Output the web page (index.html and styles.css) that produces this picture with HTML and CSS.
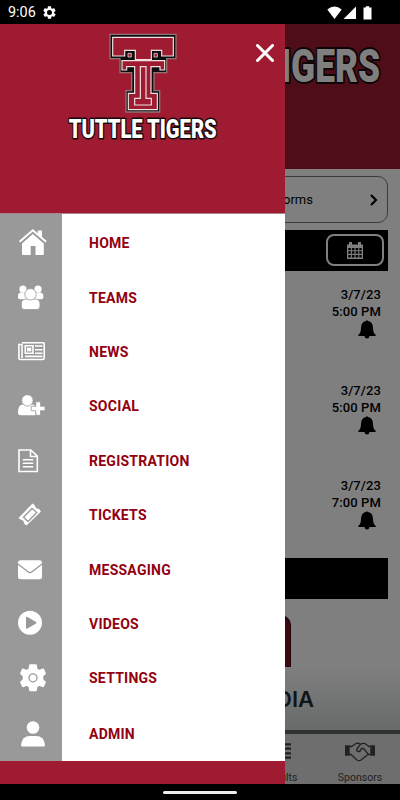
FILE: index.html
```
<!DOCTYPE html>
<html lang="en">
<head>
    <meta charset="UTF-8">
    <meta name="viewport" content="width=device-width, initial-scale=1.0">
    <title>Tuttle Tigers</title>
    <link rel="stylesheet" href="styles.css">
</head>
<body>
    <div class="status-bar">
        <span class="time">9:06</span>
        <svg class="status-gear" viewBox="0 0 24 24"><path fill-rule="evenodd" d="M19.4 13c.1-.6.1-1.400 0-2l2.100-1.600c.2-.2.2-.5.100-.7l-2-3.400c-.1-.2-.4-.3-.6-.2l-2.500 1c-.5-.4-1.100-.7-1.700-1l-.4-2.600c0-.3-.2-.5-.5-.5h-4c-.3 0-.5.200-.5.5l-.4 2.600c-.6.300-1.200.6-1.700 1l-2.500-1c-.2-.1-.5 0-.6.200l-2 3.400c-.1.200-.1.500.1.700L4.500 11c-.1.600-.1 1.400 0 2l-2.100 1.600c-.2.200-.2.500-.1.700l2 3.400c.1.200.4.300.6.200l2.500-1c.5.400 1.100.7 1.700 1l.4 2.600c0 .3.200.5.500.5h4c.3 0 .5-.2.500-.5l.4-2.600c.6-.3 1.200-.6 1.700-1l2.500 1c.2.100.5 0 .6-.2l2-3.400c.1-.2.100-.5-.1-.7zM12 16a4 4 0 1 1 0-8 4 4 0 0 1 0 8z"/></svg>
        <svg class="status-icons" viewBox="0 0 48 14">
            <path d="M.3 3.500Q7.500-2.500 14.700 3.500L7.500 13z"/>
            <path d="M29 .5V13H16.500z"/>
            <path d="M36.500 1.500h2.300V.2h3.400v1.300h2.300V13.500h-8z"/>
        </svg>
    </div>

    <div class="app">
        <main class="page">
            <header class="page-header">
                <svg class="page-wordmark" viewBox="0 0 264 40">
                    <text class="wordmark" x="3" y="35" textLength="259" lengthAdjust="spacingAndGlyphs">TUTTLE TIGERS</text>
                </svg>
            </header>
            <div class="forms-card">
                <span>Forms</span>
                <svg class="chevron" viewBox="0 0 10 12"><path d="M2 1l5 5-5 5"/></svg>
            </div>
            <div class="events-bar">
                <div class="calendar-btn">
                    <svg viewBox="0 0 16 17">
                        <path fill-rule="evenodd" d="M0 2.500h2V0h3v2.500h6V0h3v2.500h2V17H0zM1.300 6v2.200h2.500V6zm3.600 0v2.200h2.600V6zm3.700 0v2.200h2.600V6zm3.700 0v2.200h2.400V6zM1.300 9.300v2.400h2.500V9.300zm3.600 0v2.400h2.600V9.300zm3.700 0v2.400h2.600V9.300zm3.700 0v2.400h2.400V9.300zM1.300 12.900v2.600h2.500v-2.600zm3.600 0v2.600h2.600v-2.600zm3.700 0v2.600h2.600v-2.600zm3.700 0v2.600h2.400v-2.600z"/>
                    </svg>
                </div>
            </div>
            <div class="events">
                <div class="event">
                    <span>3/7/23</span>
                    <span>5:00 PM</span>
                    <svg class="bell" viewBox="0 0 18 19"><use href="#bell"/></svg>
                </div>
                <div class="event">
                    <span>3/7/23</span>
                    <span>5:00 PM</span>
                    <svg class="bell" viewBox="0 0 18 19"><use href="#bell"/></svg>
                </div>
                <div class="event">
                    <span>3/7/23</span>
                    <span>7:00 PM</span>
                    <svg class="bell" viewBox="0 0 18 19"><use href="#bell"/></svg>
                </div>
            </div>
            <div class="section-bar"></div>
            <div class="media">
                <div class="media-logo"></div>
                <div class="media-name">MEDIA</div>
            </div>
            <nav class="tabs">
                <div class="tab">
                    <svg class="list-icon" viewBox="0 0 22 16"><path d="M0 1.300h22M0 5.700h22M0 10.300h22M0 14.700h22"/></svg>
                    <span>Results</span>
                </div>
                <div class="tab">
                    <svg class="shake-icon" viewBox="0 0 30 20">
                        <path class="cuff" d="M.5 4H4v9H.5zM26 4h3.500v9H26z"/>
                        <path d="M4 4.500h2.500L11 1.500q2-.8 4.500.8 2-1.300 4.500-.8l4 3h2M4 12.500h2l6 5.500q2 1.400 4 0l7-5.500h3M15.500 2.300l-3.700 4.700q-.3 2.700 2 2.500 2-.2 2.700-3h2l5 6"/>
                    </svg>
                    <span>Sponsors</span>
                </div>
            </nav>
        </main>
        <div class="scrim"></div>

        <aside class="drawer">
            <div class="drawer-header">
                <svg class="logo" viewBox="0 0 510 375">
                    <path class="edge" d="M150 28H348V101H320V143H282V197H299V261H198V197H215V143H180V101H150Z"/>
                    <path class="inlay" d="M158 37H340V93H305V76H274V104H226V76H194V93H158Z"/>
                    <path class="inlay" d="M186 107H314V135H300V125H273V205H292V254H205V205H224V125H200V135H186Z"/>
                    <path class="inlay" d="M241 125H258V220H274V240H224V220H241Z"/>
                    <path class="eye" d="M204 85h10v11h-10zM282 85h10v11h-10z"/>
                    <text class="wordmark" x="26" y="339" textLength="444" lengthAdjust="spacingAndGlyphs">TUTTLE TIGERS</text>
                </svg>
                <svg class="close" viewBox="0 0 18 18"><path d="M1.500 1.500l15 15M16.500 1.500l-15 15"/></svg>
            </div>
            <ul class="menu">
                <li>
                    <span class="icon"><svg viewBox="0 0 30 30"><path d="M5 15.500 15.800 6l11 9.500V26q0 1-1 1h-7.300v-9h-4.800v9H6q-1 0-1-1z"/><path d="M20.800 2.500H25V10l-4.200-3.500z"/><path class="roof-gap" d="M3 15 15.800 4 28.600 15"/><path class="roof" d="M2.500 13.800 15.800 2.300 29.100 13.800"/></svg></span>
                    <span>HOME</span>
                </li>
                <li>
                    <span class="icon"><svg viewBox="0 0 30 30"><circle cx="6" cy="6.200" r="3.600"/><circle cx="21" cy="6.200" r="3.600"/><path d="M1 13q0-3.500 3-3.500h19q3.300 0 3.300 3.500v1.500q0 1.700-2 1.700H3q-2 0-2-1.700z"/><path class="cut" d="M4.300 23v-2q0-5 5-5h8.700q5 0 5 5v2q0 3.500-3 3.500H7.300q-3 0-3-3.500z"/><circle class="cut" cx="13.500" cy="11.300" r="5.700"/></svg></span>
                    <span>TEAMS</span>
                </li>
                <li>
                    <span class="icon"><svg viewBox="0 0 30 30"><path class="thin" d="M5 5.700h21.200q1 0 1 1V21q0 1.500-1.500 1.500H3.300q-1.400 0-1.400-1.500V7.500H5V21"/><path class="thin" d="M8.300 8.800h7.700v7.400H8.300zM18 9h7.500M18 12.700h7.500M18 16.200h7.500M8 19.400h17.500"/><path d="M10 10.700h4.300v3.700H10z"/></svg></span>
                    <span>NEWS</span>
                </li>
                <li>
                    <span class="icon"><svg viewBox="0 0 30 30"><path d="M1 21.500q0-8 5-8h9q3 0 3.500 3v7.800H3.500Q1 24.300 1 21.500z"/><circle class="cut" cx="10.400" cy="9.400" r="5.700"/><path class="cut" d="M18.800 10.800h4.700v4.500H28v4.400h-4.500v4.600h-4.700v-4.600h-4.500v-4.400h4.500z"/></svg></span>
                    <span>SOCIAL</span>
                </li>
                <li>
                    <span class="icon"><svg viewBox="0 0 30 30"><path class="thin" d="M2 4h11.800l6.500 6.200v15.300H2zM13.500 4v6.500h6.800M5.800 13.700h10.500M5.800 17.200h10.500M5.800 20.700h10.500"/></svg></span>
                    <span>REGISTRATION</span>
                </li>
                <li>
                    <span class="icon"><svg viewBox="0 0 30 30"><path d="M1.500 18 15.500 3.500 18 5.500q0 3 4 3.500l2 2.500L9.500 25.500 7 23.500q0-3.500-3.500-4z"/><path class="groove" d="M6.500 17.300 15 8.500l4.800 4-8.800 9z"/></svg></span>
                    <span>TICKETS</span>
                </li>
                <li>
                    <span class="icon"><svg viewBox="0 0 30 30"><rect x="1" y="5.300" width="24" height="19" rx="2.500"/><path class="groove" d="M.5 8.800 11 16.800q2 1.500 4 0L25.500 8.800"/></svg></span>
                    <span>MESSAGING</span>
                </li>
                <li>
                    <span class="icon"><svg viewBox="0 0 30 30"><path fill-rule="evenodd" d="M13 1.700a12 12 0 1 0 0 24 12 12 0 0 0 0-24zm-4 7q0-1.500 1.500-.8l8.500 5q1.200.8 0 1.600l-8.500 5q-1.500.7-1.500-.8z"/></svg></span>
                    <span>VIDEOS</span>
                </li>
                <li>
                    <span class="icon"><svg viewBox="0 0 30 30"><path class="cog" d="M13 2h6l.8 4.300 2.400 1.300 4-1.500 2 4.400L25.500 13v3.500l2.700 2.700-2 4.300-4-1.500-2.400 1.300L19 27.500h-6l-.8-4.200L9.800 22l-4 1.500-2-4.300 2.700-2.700V13l-2.700-2.500 2-4.400 4 1.500 2.400-1.300z"/><circle class="groove" cx="16" cy="14.800" r="4"/></svg></span>
                    <span>SETTINGS</span>
                </li>
                <li>
                    <span class="icon"><svg viewBox="0 0 30 30"><circle cx="16" cy="8.500" r="6.300"/><path d="M4 26q1-9 9-9h6q8 0 9 9 0 1.500-1.500 1.500h-21Q4 27.500 4 26z"/></svg></span>
                    <span>ADMIN</span>
                </li>
            </ul>
        </aside>
    </div>

    <div class="nav-bar"><div class="nav-handle"></div></div>

    <svg class="defs">
        <symbol id="bell" viewBox="0 0 18 19">
            <path d="M8 1q1-1.500 2 0 5 1 5 7 0 5 2.700 6.800v1.200H.300v-1.200Q3 13 3 8q0-6 5-7zM6.500 16h5q-.3 2.500-2.500 2.500T6.500 16z"/>
        </symbol>
    </svg>
</body>
</html>
```
FILE: styles.css
```
* {
    box-sizing: border-box;
}

body {
    margin: 0;
    width: 400px;
    height: 800px;
    overflow: hidden;
    display: flex;
    flex-direction: column;
    background: #000;
    font-family: Roboto, sans-serif;
}

.defs {
    position: absolute;
    width: 0;
    height: 0;
}

/* system bars */
.status-bar {
    height: 24px;
    flex: none;
    display: flex;
    align-items: center;
    padding: 1px 25px 0 8px;
    color: #fff;
    font-size: 14.4px;
    fill: #fff;
}

.status-gear {
    width: 15px;
    height: 15px;
    margin-left: 6px;
}

.status-icons {
    width: 48px;
    height: 14px;
    margin-left: auto;
}

.nav-bar {
    height: 16px;
    flex: none;
    padding-top: 7px;
}

.nav-handle {
    width: 74px;
    height: 3px;
    margin: 0 auto;
    border-radius: 2px;
    background: #eee;
}

/* page behind the drawer */
.app {
    position: relative;
    flex: 1;
    overflow: hidden;
}

.page {
    height: 100%;
    display: flex;
    flex-direction: column;
    background: #fff;
}

.page-header {
    height: 145px;
    flex: none;
    padding: 23px 18px 0 0;
    background: #9f1b31;
    display: flex;
    justify-content: flex-end;
    align-items: flex-start;
}

.page-wordmark {
    width: 264px;
    height: 40px;
    overflow: visible;
}

.wordmark {
    font-family: Roboto, sans-serif;
    font-weight: 900;
    fill: #fff;
    stroke: #160a0d;
    stroke-linejoin: round;
    paint-order: stroke;
}

.page-wordmark .wordmark {
    font-size: 46px;
    stroke-width: 4;
}

.logo .wordmark {
    font-size: 78px;
    stroke-width: 9;
}

.forms-card {
    height: 47px;
    flex: none;
    margin: 7px 12px 0;
    padding: 0 8px 0 263px;
    border: 1px solid #777;
    border-radius: 10px;
    display: flex;
    align-items: center;
    justify-content: space-between;
    font-size: 13px;
}

.chevron {
    width: 10px;
    height: 12px;
    fill: none;
    stroke: #000;
    stroke-width: 2.2;
}

.events-bar {
    height: 41px;
    flex: none;
    margin: 7px 12px 0;
    padding: 4px;
    background: #000;
    display: flex;
    justify-content: flex-end;
}

.calendar-btn {
    width: 58px;
    height: 32px;
    border: 2px solid #fff;
    border-radius: 8px;
    display: flex;
    align-items: center;
    justify-content: center;
}

.calendar-btn svg {
    width: 16px;
    height: 17px;
    fill: #fff;
}

.events {
    flex: none;
    height: 287px;
    padding: 15px 19px 0;
}

.event {
    height: 95.7px;
    display: flex;
    flex-direction: column;
    align-items: flex-end;
    font-size: 13px;
    font-weight: 500;
    line-height: 17px;
    letter-spacing: 0.1px;
}

.bell {
    width: 18px;
    height: 19px;
    margin-right: 5px;
    fill: #000;
}

.section-bar {
    height: 41px;
    flex: none;
    margin: 0 12px;
    background: #000;
}

.media {
    flex: 1;
    padding-top: 16px;
    background: linear-gradient(#fff 50%, #d2d6d6);
}

.media-logo {
    width: 180px;
    height: 52px;
    margin-left: 111px;
    border: 4px solid #4d0d15;
    border-width: 4px 1px 0;
    border-radius: 10px 10px 0 0;
    background: #74141f;
}

.media-name {
    margin: 18px 86px 0 0;
    color: #1e2c30;
    font: 600 22px/28px Inter, sans-serif;
    text-align: right;
}

.tabs {
    height: 54px;
    flex: none;
    padding-left: 240px;
    border-top: 4px solid #5f6565;
    background: #dcdcdc;
    display: flex;
    color: #444;
    font-size: 10.5px;
}

.tab {
    width: 80px;
    display: flex;
    flex-direction: column;
    align-items: center;
    justify-content: space-between;
    padding: 8px 0 0;
}

.tab span {
    line-height: 13px;
}

.list-icon {
    width: 22px;
    height: 18px;
    stroke: #444;
    stroke-width: 2.2;
}

.shake-icon {
    width: 30px;
    height: 20px;
    fill: none;
    stroke: #444;
    stroke-width: 1.3;
}

.shake-icon .cuff {
    fill: #444;
}

.scrim {
    position: absolute;
    inset: 0;
    background: rgba(0, 0, 0, 0.5);
}

/* drawer */
.drawer {
    position: absolute;
    top: 0;
    left: 0;
    width: 285px;
    height: 100%;
    background: #9f1b31;
}

.drawer-header {
    height: 190px;
    padding-top: 1px;
    padding-left: 60px;
    display: flex;
    align-items: flex-start;
    border-bottom: 1px solid #a9878c;
}

.logo {
    width: 170px;
    height: 125px;
    flex: none;
    overflow: visible;
}

.logo .edge {
    fill: #0d0d0f;
    stroke: #8f7377;
    stroke-width: 4;
}

.logo .inlay {
    fill: #9f1b31;
    stroke: #eee3e0;
    stroke-width: 3.5;
}

.logo .eye {
    fill: #9f1b31;
    stroke: #c9b0b0;
    stroke-width: 3;
}

.close {
    width: 18px;
    height: 18px;
    margin: 19px 0 0 26px;
    stroke: #fff;
    stroke-width: 3;
    stroke-linecap: round;
}

.menu {
    height: 547px;
    margin: 0;
    padding: 2px 0 0;
    list-style: none;
    background: linear-gradient(90deg, #999 62px, #fff 62px);
    color: #93000f;
    font-size: 14px;
    font-weight: 700;
    letter-spacing: 0.25px;
}

.menu li {
    height: 54.4px;
    display: flex;
    align-items: center;
}

.menu li:last-child {
    height: 56px;
}

.icon {
    width: 89px;
    padding-left: 17px;
    display: flex;
}

.icon svg {
    width: 30px;
    height: 30px;
    fill: #fff;
}

.icon .roof {
    fill: none;
    stroke: #fff;
    stroke-width: 2;
}

.icon .roof-gap {
    fill: none;
    stroke: #999;
    stroke-width: 1.8;
}

.icon .cog {
    stroke: #fff;
    stroke-width: 1.5;
    stroke-linejoin: round;
}

.icon .thin {
    fill: none;
    stroke: #fff;
    stroke-width: 1.6;
}

.icon .cut {
    stroke: #999;
    stroke-width: 0.8;
}

.icon .groove {
    fill: none;
    stroke: #999;
    stroke-width: 1.3;
}
```
